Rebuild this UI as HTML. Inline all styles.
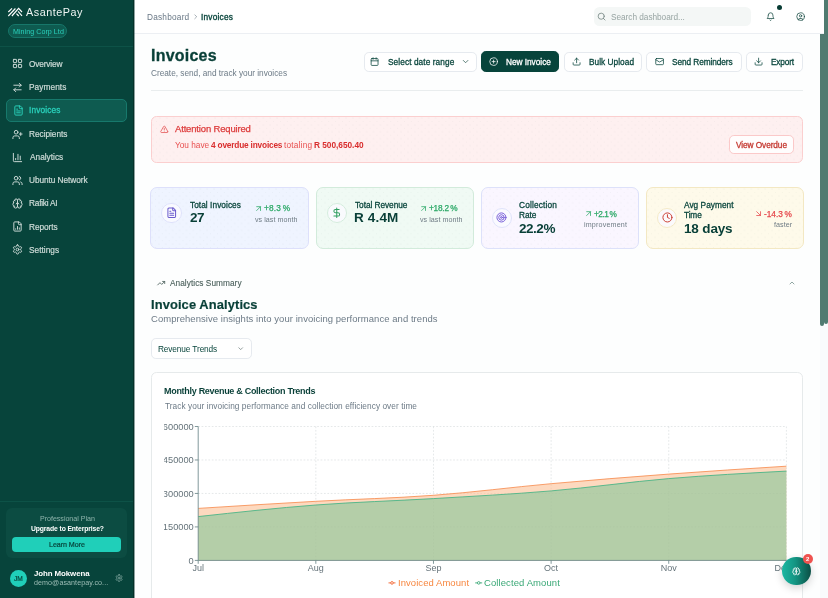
<!DOCTYPE html>
<html lang="en"><head><meta charset="utf-8"><title>AsantePay - Invoices</title>
<style>
*{box-sizing:border-box;margin:0;padding:0}
html,body{width:828px;height:598px;overflow:hidden;background:#fafbfb;font-family:"Liberation Sans",sans-serif;}
body{position:relative}
.t{position:absolute;white-space:nowrap;display:block;font-weight:400;will-change:transform}
.i{position:absolute;fill:none;stroke:currentColor;stroke-linecap:round;stroke-linejoin:round;overflow:visible}
.abs{position:absolute}
aside{position:absolute;left:0;top:0;width:134px;height:598px;background:#07443b;border-right:1px solid #053029}
.o{position:absolute;left:0;top:0;width:0;height:0;overflow:visible;display:block}
.hbg{position:absolute;left:134px;top:0;width:694px;height:33.5px;background:#fff;border-bottom:1px solid #eceff3}
.mbg{position:absolute;left:134px;top:33.5px;width:686px;height:564.5px;background:#fdfefe}
button,a{font:inherit;color:inherit;text-decoration:none;border:0;background:none;padding:0;margin:0}
ul,li{list-style:none}
.btn{position:absolute;border:1px solid #e6eaef;border-radius:4.8px;background:#fff}
.card{position:absolute;border-radius:7px;border:1.15px solid}
.circ{position:absolute;border-radius:50%}
.dots{background-image:radial-gradient(circle at 1px 1px,rgba(20,60,50,.035) .55px,transparent .8px),radial-gradient(circle at 4.45px 4.45px,rgba(20,60,50,.035) .55px,transparent .8px);background-size:6.9px 6.9px}
</style></head><body>

<aside>
<svg class="abs" viewBox="0 0 30 22" style="left:0;top:0;width:30px;height:22px" fill="none" stroke="#fff" stroke-width="1.15" stroke-linecap="butt"><path d="M8.3 12 L12 8.3"/><path d="M8.3 16 L15.4 8.5"/><path d="M11.9 16 L18.6 8.4 L22 12"/><path d="M18.1 11.4 L22 15.9"/><path d="M16.5 13.7 L18.7 16"/></svg>
<span class="t" style="left:25.69px;top:5.48px;font-size:10.80px;line-height:14.04px;color:#f0f5f4;letter-spacing:0.528px;">AsantePay</span>
<div class="abs" style="left:8.2px;top:24.3px;width:58.6px;height:13.7px;border-radius:7px;background:#0e5b50;border:1px solid #17776a"></div>
<span class="t" style="left:12.77px;top:28.28px;font-size:7.11px;line-height:9.24px;color:#2ad0bb;letter-spacing:0.047px;">Mining Corp Ltd</span>
<div class="abs" style="left:0;top:46px;width:133px;height:1px;background:#0d5247"></div>
<nav class="o">
<a class="o" href="#">
<svg class="i" viewBox="0 0 24 24" style="left:12.40px;top:58.40px;width:11px;height:11px;color:#cddbd7;stroke-width:2.1"><rect width="7" height="7" x="3" y="3" rx="1"/><rect width="7" height="7" x="14" y="3" rx="1"/><rect width="7" height="7" x="14" y="14" rx="1"/><rect width="7" height="7" x="3" y="14" rx="1"/></svg>
<span class="t" style="left:29.44px;top:58.51px;font-size:8.29px;line-height:10.78px;color:#cddbd7;letter-spacing:-0.148px;-webkit-text-stroke:0.2px #cddbd7;">Overview</span>
</a>
<a class="o" href="#">
<svg class="i" viewBox="0 0 24 24" style="left:12.40px;top:81.50px;width:11px;height:11px;color:#cddbd7;stroke-width:2.1"><path d="m16 3 4 4-4 4"/><path d="M20 7H4"/><path d="m8 21-4-4 4-4"/><path d="M4 17h16"/></svg>
<span class="t" style="left:29.33px;top:81.61px;font-size:8.29px;line-height:10.78px;color:#cddbd7;letter-spacing:0.080px;-webkit-text-stroke:0.2px #cddbd7;">Payments</span>
</a>
<a class="o" href="#">
<span class="abs" style="left:6.3px;top:99.40px;width:121.2px;height:22.4px;border-radius:5px;background:#0e5b50;border:1px solid #17796c"></span>
<svg class="i" viewBox="0 0 24 24" style="left:12.50px;top:105.00px;width:11px;height:11px;color:#2ad0bb;stroke-width:2.1"><path d="M15 2H6a2 2 0 0 0-2 2v16a2 2 0 0 0 2 2h12a2 2 0 0 0 2-2V7Z"/><path d="M14 2v4a2 2 0 0 0 2 2h4"/><path d="M10 9H8"/><path d="M16 13H8"/><path d="M16 17H8"/></svg>
<span class="t" style="left:29.49px;top:105.11px;font-size:8.29px;line-height:10.78px;color:#2ad0bb;letter-spacing:0.155px;-webkit-text-stroke:0.3px #2ad0bb;">Invoices</span>
</a>
<a class="o" href="#">
<svg class="i" viewBox="0 0 24 24" style="left:12.40px;top:128.70px;width:11px;height:11px;color:#cddbd7;stroke-width:2.1"><path d="M16 21v-2a4 4 0 0 0-4-4H6a4 4 0 0 0-4 4v2"/><circle cx="9" cy="7" r="4"/><path d="M19 8v6"/><path d="M22 11h-6"/></svg>
<span class="t" style="left:29.33px;top:128.81px;font-size:8.29px;line-height:10.78px;color:#cddbd7;letter-spacing:-0.032px;-webkit-text-stroke:0.2px #cddbd7;">Recipients</span>
</a>
<a class="o" href="#">
<svg class="i" viewBox="0 0 24 24" style="left:12.40px;top:151.90px;width:11px;height:11px;color:#cddbd7;stroke-width:2.1"><path d="M3 3v16a2 2 0 0 0 2 2h16"/><path d="M18 17V9"/><path d="M13 17V5"/><path d="M8 17v-3"/></svg>
<span class="t" style="left:29.59px;top:152.01px;font-size:8.29px;line-height:10.78px;color:#cddbd7;letter-spacing:0.010px;-webkit-text-stroke:0.2px #cddbd7;">Analytics</span>
</a>
<a class="o" href="#">
<svg class="i" viewBox="0 0 24 24" style="left:12.40px;top:175.00px;width:11px;height:11px;color:#cddbd7;stroke-width:2.1"><path d="M16 21v-2a4 4 0 0 0-4-4H6a4 4 0 0 0-4 4v2"/><circle cx="9" cy="7" r="4"/><path d="M22 21v-2a4 4 0 0 0-3-3.870"/><path d="M16 3.130a4 4 0 0 1 0 7.750"/></svg>
<span class="t" style="left:29.34px;top:175.11px;font-size:8.29px;line-height:10.78px;color:#cddbd7;letter-spacing:-0.058px;-webkit-text-stroke:0.2px #cddbd7;">Ubuntu Network</span>
</a>
<a class="o" href="#">
<svg class="i" viewBox="0 0 24 24" style="left:12.40px;top:197.90px;width:11px;height:11px;color:#cddbd7;stroke-width:2.1"><path d="M12 5a3 3 0 1 0-5.997.125 4 4 0 0 0-2.526 5.770 4 4 0 0 0 .556 6.588A4 4 0 1 0 12 18Z"/><path d="M12 5a3 3 0 1 1 5.997.125 4 4 0 0 1 2.526 5.770 4 4 0 0 1-.556 6.588A4 4 0 1 1 12 18Z"/><path d="M15 13a4.500 4.500 0 0 1-3-4 4.500 4.500 0 0 1-3 4"/><path d="M17.599 6.500a3 3 0 0 0 .399-1.375"/><path d="M6.003 5.125A3 3 0 0 0 6.401 6.500"/><path d="M3.477 10.896a4 4 0 0 1 .585-.396"/><path d="M19.938 10.500a4 4 0 0 1 .585.396"/><path d="M6 18a4 4 0 0 1-1.967-.516"/><path d="M19.967 17.484A4 4 0 0 1 18 18"/></svg>
<span class="t" style="left:29.33px;top:198.01px;font-size:8.29px;line-height:10.78px;color:#cddbd7;letter-spacing:-0.223px;-webkit-text-stroke:0.2px #cddbd7;">Rafiki AI</span>
</a>
<a class="o" href="#">
<svg class="i" viewBox="0 0 24 24" style="left:12.40px;top:221.10px;width:11px;height:11px;color:#cddbd7;stroke-width:2.1"><path d="M15 2H6a2 2 0 0 0-2 2v16a2 2 0 0 0 2 2h12a2 2 0 0 0 2-2V7Z"/><path d="M14 2v4a2 2 0 0 0 2 2h4"/><path d="M8 18v-1"/><path d="M12 18v-6"/><path d="M16 18v-3"/></svg>
<span class="t" style="left:29.33px;top:221.81px;font-size:8.29px;line-height:10.78px;color:#cddbd7;letter-spacing:-0.069px;-webkit-text-stroke:0.2px #cddbd7;">Reports</span>
</a>
<a class="o" href="#">
<svg class="i" viewBox="0 0 24 24" style="left:12.40px;top:244.20px;width:11px;height:11px;color:#cddbd7;stroke-width:2.1"><path d="M12.220 2h-.440a2 2 0 0 0-2 2v.180a2 2 0 0 1-1 1.730l-.430.250a2 2 0 0 1-2 0l-.150-.080a2 2 0 0 0-2.730.730l-.220.380a2 2 0 0 0 .730 2.730l.150.100a2 2 0 0 1 1 1.720v.510a2 2 0 0 1-1 1.740l-.150.090a2 2 0 0 0-.730 2.730l.220.380a2 2 0 0 0 2.730.730l.150-.080a2 2 0 0 1 2 0l.430.250a2 2 0 0 1 1 1.730V20a2 2 0 0 0 2 2h.440a2 2 0 0 0 2-2v-.180a2 2 0 0 1 1-1.730l.430-.250a2 2 0 0 1 2 0l.150.080a2 2 0 0 0 2.730-.730l.220-.390a2 2 0 0 0-.730-2.730l-.150-.080a2 2 0 0 1-1-1.740v-.500a2 2 0 0 1 1-1.740l.150-.090a2 2 0 0 0 .730-2.730l-.220-.380a2 2 0 0 0-2.730-.730l-.150.080a2 2 0 0 1-2 0l-.430-.250a2 2 0 0 1-1-1.730V4a2 2 0 0 0-2-2z"/><circle cx="12" cy="12" r="3"/></svg>
<span class="t" style="left:29.45px;top:245.01px;font-size:8.29px;line-height:10.78px;color:#cddbd7;letter-spacing:0.022px;-webkit-text-stroke:0.2px #cddbd7;">Settings</span>
</a>
</nav>
<div class="abs" style="left:0;top:501px;width:133px;height:1px;background:#0d5247"></div>
<div class="abs" style="left:6.3px;top:508px;width:121.2px;height:50px;border-radius:6px;background:#0c4c42"></div>
<span class="t" style="left:39.77px;top:515.08px;font-size:7.11px;line-height:9.24px;color:#8fb4ac;letter-spacing:-0.030px;">Professional Plan</span>
<span class="t" style="left:30.64px;top:525.08px;font-size:6.80px;line-height:8.84px;color:#fff;font-weight:700;letter-spacing:-0.121px;">Upgrade to Enterprise?</span>
<button class="o">
<span class="abs" style="left:12.3px;top:537px;width:109.2px;height:14.8px;border-radius:4px;background:#20cfb9"></span>
<span class="t" style="left:48.77px;top:541.08px;font-size:7.11px;line-height:9.24px;color:#07443b;letter-spacing:-0.051px;-webkit-text-stroke:0.2px #07443b;">Learn More</span>
</button>
<div class="circ" style="left:9.8px;top:569.5px;width:17px;height:17px;background:#20cfb9"></div>
<span class="t" style="left:14.36px;top:574.81px;font-size:6.60px;line-height:8.58px;color:#07443b;letter-spacing:0.055px;-webkit-text-stroke:0.2px #07443b;">JM</span>
<span class="t" style="left:33.75px;top:568.66px;font-size:7.90px;line-height:10.27px;color:#fff;font-weight:700;letter-spacing:-0.090px;">John Mokwena</span>
<span class="t" style="left:33.68px;top:579.08px;font-size:7.11px;line-height:9.24px;color:#9dbdb6;letter-spacing:0.077px;">demo@asantepay.co...</span>
<svg class="i" viewBox="0 0 24 24" style="left:114.90px;top:573.90px;width:8.2px;height:8.2px;color:#8fb3ab;stroke-width:2"><path d="M12.220 2h-.440a2 2 0 0 0-2 2v.180a2 2 0 0 1-1 1.730l-.430.250a2 2 0 0 1-2 0l-.150-.080a2 2 0 0 0-2.730.730l-.220.380a2 2 0 0 0 .730 2.730l.150.100a2 2 0 0 1 1 1.720v.510a2 2 0 0 1-1 1.740l-.150.090a2 2 0 0 0-.730 2.730l.220.380a2 2 0 0 0 2.730.730l.150-.080a2 2 0 0 1 2 0l.430.250a2 2 0 0 1 1 1.730V20a2 2 0 0 0 2 2h.440a2 2 0 0 0 2-2v-.180a2 2 0 0 1 1-1.730l.430-.250a2 2 0 0 1 2 0l.150.080a2 2 0 0 0 2.730-.730l.220-.390a2 2 0 0 0-.730-2.730l-.150-.080a2 2 0 0 1-1-1.740v-.500a2 2 0 0 1 1-1.740l.150-.090a2 2 0 0 0 .730-2.730l-.220-.380a2 2 0 0 0-2.730-.730l-.150.080a2 2 0 0 1-2 0l-.430-.250a2 2 0 0 1-1-1.730V4a2 2 0 0 0-2-2z"/><circle cx="12" cy="12" r="3"/></svg>
</aside>
<header class="o">
<div class="hbg"></div>
<nav class="o">
<a class="t" style="left:146.73px;top:11.81px;font-size:8.29px;line-height:10.78px;color:#687785;letter-spacing:0.213px;">Dashboard</a>
<svg class="i" viewBox="0 0 24 24" style="left:191.65px;top:13.25px;width:7.5px;height:7.5px;color:#7c8993;stroke-width:2.2"><path d="m9 18 6-6-6-6"/></svg>
<span class="t" style="left:201.39px;top:11.81px;font-size:8.29px;line-height:10.78px;color:#0a463d;letter-spacing:0.226px;-webkit-text-stroke:0.35px #0a463d;">Invoices</span>
</nav>
<label class="o">
<div class="abs" style="left:593.6px;top:7px;width:157.4px;height:19px;border-radius:5.5px;background:#f4f7f6"></div>
<svg class="i" viewBox="0 0 24 24" style="left:597.40px;top:12.20px;width:9.2px;height:9.2px;color:#6e7f7c;stroke-width:2"><circle cx="11" cy="11" r="8"/><path d="m21 21-4.300-4.300"/></svg>
<span class="t" style="left:610.55px;top:11.81px;font-size:8.29px;line-height:10.78px;color:#98a5a3;letter-spacing:-0.041px;">Search dashboard...</span>
</label>
<button class="o">
<svg class="i" viewBox="0 0 24 24" style="left:766.10px;top:12.00px;width:9.2px;height:9.2px;color:#1c4f47;stroke-width:2"><path d="M6 8a6 6 0 0 1 12 0c0 7 3 9 3 9H3s3-2 3-9"/><path d="M10.300 21a1.940 1.940 0 0 0 3.400 0"/></svg>
<span class="circ" style="left:777.1px;top:4.8px;width:5.4px;height:5.4px;background:#073b33"></span>
</button>
<button class="o">
<svg class="i" viewBox="0 0 24 24" style="left:795.70px;top:12.00px;width:9.2px;height:9.2px;color:#1c4f47;stroke-width:2"><circle cx="12" cy="12" r="10"/><circle cx="12" cy="10" r="3"/><path d="M7 20.662V19a2 2 0 0 1 2-2h6a2 2 0 0 1 2 2v1.662"/></svg>
</button>
</header>
<main class="o">
<div class="mbg"></div>
<h1 class="t" style="left:151.47px;top:46.00px;font-size:16.00px;line-height:20.8px;color:#083f37;font-weight:700;letter-spacing:0.214px;-webkit-text-stroke:0.3px #083f37;">Invoices</h1>
<p class="t" style="left:150.83px;top:67.81px;font-size:8.29px;line-height:10.78px;color:#6c7a86;letter-spacing:-0.019px;">Create, send, and track your invoices</p>
<div class="abs" style="left:151px;top:89.5px;width:652px;height:1px;background:#e9edee"></div>
<div class="o"><button class="o">
</button><button class="o"><span class="btn" style="left:364.3px;top:51.5px;width:112.5px;height:20.7px"></span>
<svg class="i" viewBox="0 0 24 24" style="left:370.40px;top:57.00px;width:9.2px;height:9.2px;color:#0a463d;stroke-width:2"><path d="M8 2v4"/><path d="M16 2v4"/><rect width="18" height="18" x="3" y="4" rx="2"/><path d="M3 10h18"/></svg>
<span class="t" style="left:387.65px;top:56.61px;font-size:8.29px;line-height:10.78px;color:#0a463d;letter-spacing:0.083px;-webkit-text-stroke:0.28px #0a463d;">Select date range</span>
<svg class="i" viewBox="0 0 24 24" style="left:461.40px;top:57.00px;width:9.2px;height:9.2px;color:#2f5b53;stroke-width:2"><path d="m6 9 6 6 6-6"/></svg>
</button><button class="o"><span class="btn" style="left:481px;top:51.4px;width:78.3px;height:20.9px;background:#07443b;border-color:#07443b"></span>
<svg class="i" viewBox="0 0 24 24" style="left:489.20px;top:57.00px;width:9.2px;height:9.2px;color:#fff;stroke-width:2"><circle cx="12" cy="12" r="10"/><path d="M8 12h8"/><path d="M12 8v8"/></svg>
<span class="t" style="left:506.33px;top:56.61px;font-size:8.29px;line-height:10.78px;color:#fff;letter-spacing:-0.026px;-webkit-text-stroke:0.28px #fff;">New Invoice</span>
</button><button class="o"><span class="btn" style="left:563.6px;top:51.5px;width:78.4px;height:20.7px"></span>
<svg class="i" viewBox="0 0 24 24" style="left:572.20px;top:57.00px;width:9.2px;height:9.2px;color:#0a463d;stroke-width:2"><path d="M21 15v4a2 2 0 0 1-2 2H5a2 2 0 0 1-2-2v-4"/><path d="m17 8-5-5-5 5"/><path d="M12 3v12"/></svg>
<span class="t" style="left:589.03px;top:56.61px;font-size:8.29px;line-height:10.78px;color:#0a463d;letter-spacing:0.036px;-webkit-text-stroke:0.28px #0a463d;">Bulk Upload</span>
</button><button class="o"><span class="btn" style="left:646.3px;top:51.5px;width:95.3px;height:20.7px"></span>
<svg class="i" viewBox="0 0 24 24" style="left:654.90px;top:57.00px;width:9.2px;height:9.2px;color:#0a463d;stroke-width:2"><rect width="20" height="16" x="2" y="4" rx="2"/><path d="m22 7-8.970 5.700a1.940 1.940 0 0 1-2.060 0L2 7"/></svg>
<span class="t" style="left:671.85px;top:56.61px;font-size:8.29px;line-height:10.78px;color:#0a463d;letter-spacing:-0.077px;-webkit-text-stroke:0.28px #0a463d;">Send Reminders</span>
</button><button class="o"><span class="btn" style="left:745.9px;top:51.5px;width:56.9px;height:20.7px"></span>
<svg class="i" viewBox="0 0 24 24" style="left:754.40px;top:57.00px;width:9.2px;height:9.2px;color:#0a463d;stroke-width:2"><path d="M21 15v4a2 2 0 0 1-2 2H5a2 2 0 0 1-2-2v-4"/><path d="m7 10 5 5 5-5"/><path d="M12 15V3"/></svg>
<span class="t" style="left:771.03px;top:56.61px;font-size:8.29px;line-height:10.78px;color:#0a463d;letter-spacing:-0.159px;-webkit-text-stroke:0.28px #0a463d;">Export</span>
</button></div>
<section class="o">
<div class="abs dots" style="left:151px;top:115.8px;width:652px;height:47.2px;border-radius:5.5px;background-color:#fef0f0;border:1.15px solid #fbcfcf"></div>
<svg class="i" viewBox="0 0 24 24" style="left:160.00px;top:124.90px;width:8.6px;height:8.6px;color:#e24545;stroke-width:2"><path d="m21.730 18-8-14a2 2 0 0 0-3.480 0l-8 14A2 2 0 0 0 4 21h16a2 2 0 0 0 1.730-3"/><path d="M12 9v4"/><path d="M12 17h.01"/></svg>
<h3 class="t" style="left:174.79px;top:123.04px;font-size:9.48px;line-height:12.32px;color:#dd3b3b;letter-spacing:-0.153px;-webkit-text-stroke:0.25px #dd3b3b;">Attention Required</h3>
<span class="t" style="left:174.73px;top:139.51px;font-size:8.29px;line-height:10.78px;color:#e85050;letter-spacing:-0.012px;">You have</span>
<strong class="t" style="left:210.65px;top:139.51px;font-size:8.29px;line-height:10.78px;color:#d92d2d;font-weight:700;letter-spacing:-0.182px;">4 overdue invoices</strong>
<span class="t" style="left:284.35px;top:139.51px;font-size:8.29px;line-height:10.78px;color:#e85050;letter-spacing:0.194px;">totaling</span>
<strong class="t" style="left:313.98px;top:139.51px;font-size:8.29px;line-height:10.78px;color:#d92d2d;font-weight:700;letter-spacing:-0.012px;">R 500,650.40</strong>
<button class="o">
<span class="btn" style="left:728.8px;top:135.3px;width:65px;height:19px;border-color:#fbc9c9;background:#fffdfd"></span>
<span class="t" style="left:736.19px;top:140.21px;font-size:8.29px;line-height:10.78px;color:#c53a32;letter-spacing:-0.078px;-webkit-text-stroke:0.3px #c53a32;">View Overdue</span>
</button>
</section>
<section class="o">
<article class="o">
<div class="card dots" style="left:150.3px;top:187.4px;width:158.5px;height:61.4px;background-color:#eff4ff;border-color:#dde0fb"></div>
<div class="circ" style="left:161.4px;top:202.5px;width:20.2px;height:20.2px;background:#fbfbff;border:1px solid #dde0fb;opacity:.9"></div>
<svg class="i" viewBox="0 0 24 24" style="left:165.75px;top:206.85px;width:11.5px;height:11.5px;color:#6a5acd;stroke-width:2.1"><path d="M15 2H6a2 2 0 0 0-2 2v16a2 2 0 0 0 2 2h12a2 2 0 0 0 2-2V7Z"/><path d="M14 2v4a2 2 0 0 0 2 2h4"/><path d="M10 9H8"/><path d="M16 13H8"/><path d="M16 17H8"/></svg>
<span class="t" style="left:189.73px;top:199.81px;font-size:8.29px;line-height:10.78px;color:#0a463d;letter-spacing:0.055px;-webkit-text-stroke:0.28px #0a463d;">Total Invoices</span>
<span class="t" style="left:189.61px;top:208.92px;font-size:13.50px;line-height:17.55px;color:#083f37;font-weight:700;letter-spacing:-0.455px;">27</span>
<svg class="i" viewBox="0 0 24 24" style="left:254.10px;top:203.90px;width:9.2px;height:9.2px;color:#2aa866;stroke-width:2"><path d="M7 7h10v10"/><path d="M7 17 17 7"/></svg>
<span class="t" style="left:264.14px;top:202.91px;font-size:8.29px;line-height:10.78px;color:#2aa866;letter-spacing:0.158px;-webkit-text-stroke:0.25px #2aa866;word-spacing:-0.6px;">+8.3 %</span>
<span class="t" style="left:254.59px;top:216.08px;font-size:7.11px;line-height:9.24px;color:#6f7c85;letter-spacing:0.042px;">vs last month</span>
</article>
<article class="o">
<div class="card dots" style="left:315.5px;top:187.4px;width:158.5px;height:61.4px;background-color:#f0faf4;border-color:#d2ebdb"></div>
<div class="circ" style="left:326.6px;top:202.5px;width:20.2px;height:20.2px;background:#fbfbff;border:1px solid #d2ebdb;opacity:.9"></div>
<svg class="i" viewBox="0 0 24 24" style="left:330.90px;top:206.85px;width:11.5px;height:11.5px;color:#2f9e5f;stroke-width:2.1"><path d="M12 2v20"/><path d="M17 5H9.500a3.500 3.500 0 0 0 0 7h5a3.500 3.500 0 0 1 0 7H6"/></svg>
<span class="t" style="left:354.63px;top:199.81px;font-size:8.29px;line-height:10.78px;color:#0a463d;letter-spacing:-0.049px;-webkit-text-stroke:0.28px #0a463d;">Total Revenue</span>
<span class="t" style="left:354.34px;top:208.92px;font-size:13.50px;line-height:17.55px;color:#083f37;font-weight:700;letter-spacing:0.159px;">R 4.4M</span>
<svg class="i" viewBox="0 0 24 24" style="left:419.10px;top:203.90px;width:9.2px;height:9.2px;color:#2aa866;stroke-width:2"><path d="M7 7h10v10"/><path d="M7 17 17 7"/></svg>
<span class="t" style="left:429.14px;top:202.91px;font-size:8.29px;line-height:10.78px;color:#2aa866;letter-spacing:-0.236px;-webkit-text-stroke:0.25px #2aa866;word-spacing:-0.6px;">+18.2 %</span>
<span class="t" style="left:419.59px;top:216.08px;font-size:7.11px;line-height:9.24px;color:#6f7c85;letter-spacing:0.042px;">vs last month</span>
</article>
<article class="o">
<div class="card dots" style="left:480.6px;top:187.4px;width:158.5px;height:61.4px;background-color:#faf6ff;border-color:#dde1fa"></div>
<div class="circ" style="left:491.7px;top:207.7px;width:20.2px;height:20.2px;background:#fbfbff;border:1px solid #dde1fa;opacity:.9"></div>
<svg class="i" viewBox="0 0 24 24" style="left:496.35px;top:212.35px;width:10.9px;height:10.9px;color:#7358d6;stroke-width:2.1"><circle cx="12" cy="12" r="10"/><circle cx="12" cy="12" r="6"/><circle cx="12" cy="12" r="2"/></svg>
<span class="t" style="left:519.43px;top:199.81px;font-size:8.29px;line-height:10.78px;color:#0a463d;letter-spacing:0.166px;-webkit-text-stroke:0.28px #0a463d;">Collection</span>
<span class="t" style="left:519.33px;top:210.21px;font-size:8.29px;line-height:10.78px;color:#0a463d;letter-spacing:-0.048px;-webkit-text-stroke:0.28px #0a463d;">Rate</span>
<span class="t" style="left:519.41px;top:220.12px;font-size:13.50px;line-height:17.55px;color:#083f37;font-weight:700;letter-spacing:-0.464px;">22.2%</span>
<svg class="i" viewBox="0 0 24 24" style="left:584.10px;top:209.30px;width:9.2px;height:9.2px;color:#2aa866;stroke-width:2"><path d="M7 7h10v10"/><path d="M7 17 17 7"/></svg>
<span class="t" style="left:594.14px;top:209.01px;font-size:8.29px;line-height:10.78px;color:#2aa866;letter-spacing:-0.502px;-webkit-text-stroke:0.25px #2aa866;word-spacing:-0.6px;">+2.1 %</span>
<span class="t" style="left:583.91px;top:221.08px;font-size:7.11px;line-height:9.24px;color:#6f7c85;letter-spacing:0.184px;">improvement</span>
</article>
<article class="o">
<div class="card dots" style="left:645.8px;top:187.4px;width:158.5px;height:61.4px;background-color:#fefaea;border-color:#f3e8c3"></div>
<div class="circ" style="left:656.9px;top:207.7px;width:20.2px;height:20.2px;background:#fbfbff;border:1px solid #f3e8c3;opacity:.9"></div>
<svg class="i" viewBox="0 0 24 24" style="left:661.50px;top:212.35px;width:10.9px;height:10.9px;color:#c9382c;stroke-width:2.1"><circle cx="12" cy="12" r="10"/><path d="M12 6v6l4 2"/></svg>
<span class="t" style="left:684.49px;top:199.81px;font-size:8.29px;line-height:10.78px;color:#0a463d;letter-spacing:0.038px;-webkit-text-stroke:0.28px #0a463d;">Avg Payment</span>
<span class="t" style="left:684.43px;top:210.21px;font-size:8.29px;line-height:10.78px;color:#0a463d;letter-spacing:-0.113px;-webkit-text-stroke:0.28px #0a463d;">Time</span>
<span class="t" style="left:684.16px;top:220.12px;font-size:13.50px;line-height:17.55px;color:#083f37;font-weight:700;letter-spacing:-0.156px;">18 days</span>
<svg class="i" viewBox="0 0 24 24" style="left:754.10px;top:209.30px;width:9.2px;height:9.2px;color:#e5474c;stroke-width:2"><path d="m7 7 10 10"/><path d="M17 7v10H7"/></svg>
<span class="t" style="left:764.15px;top:209.01px;font-size:8.29px;line-height:10.78px;color:#e5474c;letter-spacing:-0.013px;-webkit-text-stroke:0.25px #e5474c;word-spacing:-0.6px;">-14.3 %</span>
<span class="t" style="left:773.66px;top:221.08px;font-size:7.11px;line-height:9.24px;color:#6f7c85;letter-spacing:0.048px;">faster</span>
</article>
</section>
<section class="o">
<svg class="i" viewBox="0 0 24 24" style="left:157.20px;top:278.50px;width:8.4px;height:8.4px;color:#4b605c;stroke-width:2.4"><path d="M22 7 13.500 15.500 8.500 10.500 2 17"/><path d="M16 7h6v6"/></svg>
<span class="t" style="left:170.29px;top:277.81px;font-size:8.29px;line-height:10.78px;color:#4b605c;letter-spacing:0.042px;-webkit-text-stroke:0.1px #4b605c;">Analytics Summary</span>
<svg class="i" viewBox="0 0 24 24" style="left:788.30px;top:278.60px;width:8px;height:8px;color:#5b7a74;stroke-width:2"><path d="m18 15-6-6-6 6"/></svg>
<h2 class="t" style="left:150.85px;top:296.91px;font-size:12.90px;line-height:16.77px;color:#083f37;font-weight:700;letter-spacing:0.105px;-webkit-text-stroke:0.2px #083f37;">Invoice Analytics</h2>
<p class="t" style="left:151.01px;top:313.14px;font-size:9.48px;line-height:12.32px;color:#6c7a86;letter-spacing:0.061px;">Comprehensive insights into your invoicing performance and trends</p>
<div class="btn" style="left:151.2px;top:338.3px;width:100.4px;height:21.1px"></div>
<span class="t" style="left:157.73px;top:343.61px;font-size:8.29px;line-height:10.78px;color:#0a463d;letter-spacing:-0.118px;">Revenue Trends</span>
<svg class="i" viewBox="0 0 24 24" style="left:236.60px;top:345.10px;width:7.4px;height:7.4px;color:#6c7b7a;stroke-width:2.4"><path d="m6 9 6 6 6-6"/></svg>
<div class="abs" style="left:151px;top:372.3px;width:652px;height:240px;border-radius:5.5px;background:#fff;border:1px solid #e6eaeb"></div>
<h3 class="t" style="left:164.36px;top:385.75px;font-size:9.00px;line-height:11.7px;color:#083f37;font-weight:700;letter-spacing:-0.296px;">Monthly Revenue &amp; Collection Trends</h3>
<p class="t" style="left:164.53px;top:400.51px;font-size:8.29px;line-height:10.78px;color:#6c7a86;letter-spacing:0.058px;">Track your invoicing performance and collection efficiency over time</p>
<svg class="abs" style="left:164.4px;top:415px;width:639.6px;height:183px;overflow:hidden;will-change:transform" viewBox="164.4 415 639.6 183" font-family="Liberation Sans, sans-serif"><g stroke="#d3d8da" stroke-width="0.6" stroke-dasharray="1.7 1.7" fill="none"><path d="M198.6 526.92H786.8"/><path d="M198.6 493.45H786.8"/><path d="M198.6 459.98H786.8"/><path d="M198.6 426.50H786.8"/><path d="M316.24 426.5V560.4"/><path d="M433.88 426.5V560.4"/><path d="M551.52 426.5V560.4"/><path d="M669.16 426.5V560.4"/><path d="M786.80 426.5V560.4"/></g><path d="M198.60 508.40C237.81 505.94 277.03 503.48 316.24 501.30C355.45 499.12 394.67 498.23 433.88 495.30C473.09 492.37 512.31 487.23 551.52 483.70C590.73 480.17 629.95 477.02 669.16 474.10C708.37 471.18 747.59 468.69 786.80 466.20 L786.8 560.4 L198.6 560.4Z" fill="#fbbf95" fill-opacity="0.6" stroke="none"/><path d="M198.60 508.40C237.81 505.94 277.03 503.48 316.24 501.30C355.45 499.12 394.67 498.23 433.88 495.30C473.09 492.37 512.31 487.23 551.52 483.70C590.73 480.17 629.95 477.02 669.16 474.10C708.37 471.18 747.59 468.69 786.80 466.20" fill="none" stroke="#f7935a" stroke-width="0.9"/><path d="M198.60 516.60C237.81 512.30 277.03 508.00 316.24 505.00C355.45 502.00 394.67 500.95 433.88 498.60C473.09 496.25 512.31 494.23 551.52 490.90C590.73 487.57 629.95 481.90 669.16 478.60C708.37 475.30 747.59 473.20 786.80 471.10 L786.8 560.4 L198.6 560.4Z" fill="#83c799" fill-opacity="0.6" stroke="none"/><path d="M198.60 516.60C237.81 512.30 277.03 508.00 316.24 505.00C355.45 502.00 394.67 500.95 433.88 498.60C473.09 496.25 512.31 494.23 551.52 490.90C590.73 487.57 629.95 481.90 669.16 478.60C708.37 475.30 747.59 473.20 786.80 471.10" fill="none" stroke="#4bb487" stroke-width="0.9"/><g stroke="#6c8789" stroke-width="0.85" fill="none"><path d="M198.6 426.5V560.4"/><path d="M198.6 560.4H786.8"/><path d="M195.20 560.40H198.6"/><path d="M195.20 526.92H198.6"/><path d="M195.20 493.45H198.6"/><path d="M195.20 459.98H198.6"/><path d="M195.20 426.50H198.6"/><path d="M198.60 560.4V563.80"/><path d="M316.24 560.4V563.80"/><path d="M433.88 560.4V563.80"/><path d="M551.52 560.4V563.80"/><path d="M669.16 560.4V563.80"/><path d="M786.80 560.4V563.80"/></g><g fill="#66747b" font-size="9.3"><text x="194.2" y="563.70" text-anchor="end">0</text><text x="194.2" y="530.22" text-anchor="end">150000</text><text x="194.2" y="496.75" text-anchor="end">300000</text><text x="194.2" y="463.28" text-anchor="end">450000</text><text x="194.2" y="429.80" text-anchor="end">600000</text><text x="198.60" y="571" text-anchor="middle" font-size="9">Jul</text><text x="316.24" y="571" text-anchor="middle" font-size="9">Aug</text><text x="433.88" y="571" text-anchor="middle" font-size="9">Sep</text><text x="551.52" y="571" text-anchor="middle" font-size="9">Oct</text><text x="669.16" y="571" text-anchor="middle" font-size="9">Nov</text><text x="790.8" y="571" text-anchor="end" font-size="9">Dec</text></g><g fill="none" stroke-width="0.9"><path d="M388.9 582.9h7" stroke="#f2622e"/><circle cx="392.4" cy="582.9" r="1.3" stroke="#f2622e" fill="#fff"/><path d="M475.6 582.9h7" stroke="#3aa876"/><circle cx="479.1" cy="582.9" r="1.3" stroke="#3aa876" fill="#fff"/></g></svg>
<span class="t" style="left:397.95px;top:576.54px;font-size:9.48px;line-height:12.32px;color:#f78740;letter-spacing:0.072px;">Invoiced Amount</span>
<span class="t" style="left:484.01px;top:576.54px;font-size:9.48px;line-height:12.32px;color:#3aa876;letter-spacing:0.108px;">Collected Amount</span>
</section>
</main>
<div class="abs" style="left:134px;top:0;width:1px;height:598px;background:rgba(5,52,45,.45)"></div>
<div class="abs" style="left:820px;top:33.5px;width:8px;height:564.5px;background:#f9fbfc"></div>
<div class="abs" style="left:824.2px;top:0;width:3.8px;height:324px;border-radius:0 0 2px 2px;background:#507b71"></div>
<div class="abs" style="left:820px;top:33.5px;width:4.4px;height:292px;border-radius:0 0 2px 2px;background:#507b71"></div>
<button class="o">
<span class="circ" style="left:782.4px;top:556.5px;width:28.4px;height:28.4px;background:linear-gradient(90deg,#1bb7a2 0%,#149583 45%,#0b4f45 100%);box-shadow:0 3px 8px rgba(0,0,0,.18)"></span>
<svg class="i" viewBox="0 0 24 24" style="left:792.30px;top:566.60px;width:8.6px;height:8.6px;color:#fff;stroke-width:2"><path d="M12 5a3 3 0 1 0-5.997.125 4 4 0 0 0-2.526 5.770 4 4 0 0 0 .556 6.588A4 4 0 1 0 12 18Z"/><path d="M12 5a3 3 0 1 1 5.997.125 4 4 0 0 1 2.526 5.770 4 4 0 0 1-.556 6.588A4 4 0 1 1 12 18Z"/><path d="M15 13a4.500 4.500 0 0 1-3-4 4.500 4.500 0 0 1-3 4"/><path d="M17.599 6.500a3 3 0 0 0 .399-1.375"/><path d="M6.003 5.125A3 3 0 0 0 6.401 6.500"/><path d="M3.477 10.896a4 4 0 0 1 .585-.396"/><path d="M19.938 10.500a4 4 0 0 1 .585.396"/><path d="M6 18a4 4 0 0 1-1.967-.516"/><path d="M19.967 17.484A4 4 0 0 1 18 18"/></svg>
<div class="circ" style="left:802.8px;top:553.8px;width:10.6px;height:10.6px;background:#ef5350"></div>
<span class="t" style="left:806.42px;top:556.30px;font-size:6.00px;line-height:7.8px;color:#fff;font-weight:700;">2</span>
</button>
</body></html>
